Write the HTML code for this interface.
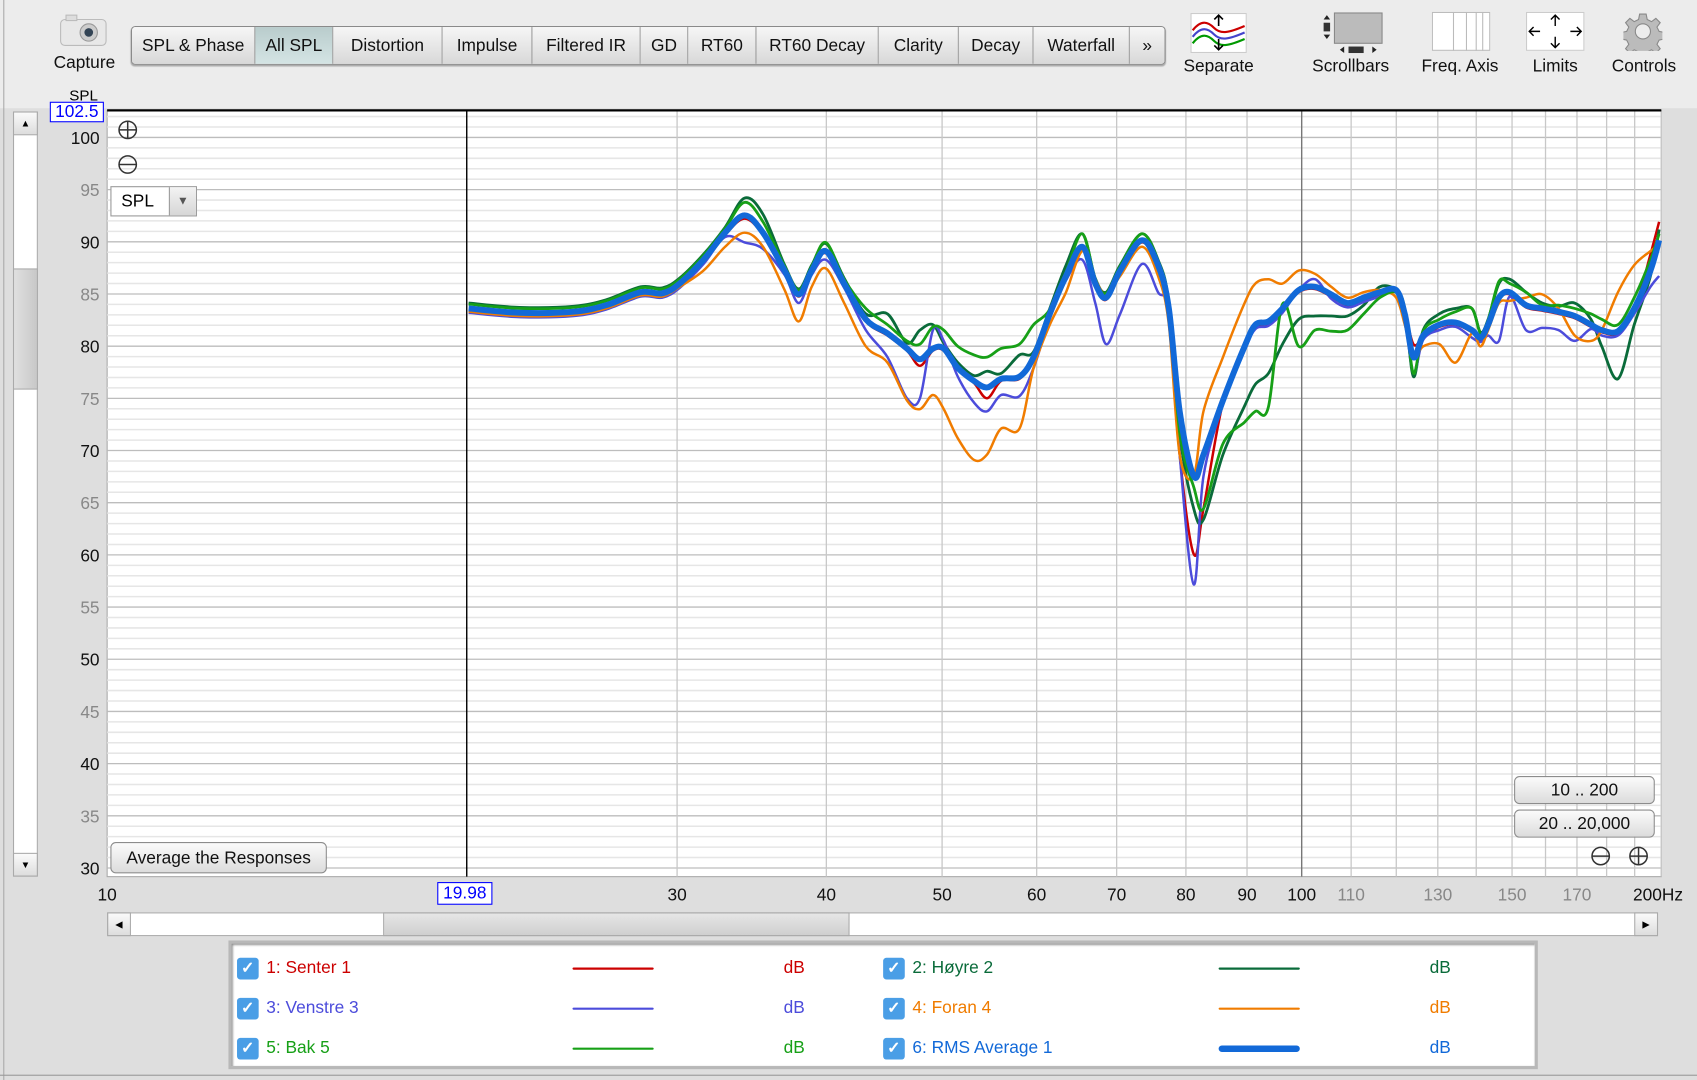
<!DOCTYPE html>
<html><head><meta charset="utf-8"><style>
*{margin:0;padding:0;box-sizing:border-box}
html,body{width:1697px;height:1080px;overflow:hidden;background:#dedede;font-family:"Liberation Sans",sans-serif}
#w{position:absolute;left:0;top:0;width:1568px;height:998px;transform:scale(1.08227);transform-origin:0 0;background:#dedede}
.abs{position:absolute}
.tabs{position:absolute;left:121px;top:24px;height:36px;display:flex;border:1px solid #8a8a8a;border-radius:4px;overflow:hidden;box-shadow:0 1px 1px #aaa}
.tabs div{height:34px;line-height:35px;font-size:16px;text-align:center;background:linear-gradient(#f6f6f6,#d8d8d8);border-right:1px solid #9a9a9a;color:#111;flex:none}
.tabs div.sel{background:linear-gradient(#b9cccc,#d4e4e4);}
.lbl{position:absolute;font-size:16px;color:#111;text-align:center}
.btn{position:absolute;border:1px solid #8c8c8c;border-radius:5px;background:linear-gradient(#fbfbfb,#dcdcdc);font-size:16px;text-align:center;color:#111}
.leg{position:absolute;font-size:16px}
.cb{position:absolute;width:20px;height:20px;background:#4a9ee6;border-radius:3px;color:#fff;font-size:15px;line-height:20px;text-align:center;font-weight:bold}
</style></head><body><div id="w">
<div class="abs" style="left:0;top:0;width:1568px;height:100px;background:#ececec"></div>
<div class="abs" style="left:3px;top:0;width:1px;height:998px;background:#aaa"></div>
<svg class="abs" style="left:55px;top:12px" width="44" height="32"><rect x="1" y="6" width="42" height="24" rx="4" fill="#e8e8e8" stroke="#bbb"/><rect x="6" y="2" width="10" height="5" fill="#ddd" stroke="#bbb"/><circle cx="27" cy="18" r="8" fill="#ccc" stroke="#999"/><circle cx="27" cy="18" r="4" fill="#345"/></svg>
<div class="lbl" style="left:40px;top:50px;width:76px">Capture</div>
<div class="tabs"><div style="width:114px">SPL &amp; Phase</div><div class="sel" style="width:72px">All SPL</div><div style="width:101px">Distortion</div><div style="width:83px">Impulse</div><div style="width:100px">Filtered IR</div><div style="width:44px">GD</div><div style="width:63px">RT60</div><div style="width:113px">RT60 Decay</div><div style="width:74px">Clarity</div><div style="width:69px">Decay</div><div style="width:89px">Waterfall</div><div style="width:32px;border-right:none">»</div></div>
<svg class="abs" style="left:1100px;top:12px" width="52" height="37"><rect x=".5" y=".5" width="51" height="36" fill="#fff" stroke="#ccc"/><path d="M2 16 C10 6,16 8,22 14 S36 18,50 12" stroke="#c00" stroke-width="2" fill="none"/><path d="M2 22 C10 12,16 14,22 20 S36 24,50 18" stroke="#44c" stroke-width="2" fill="none"/><path d="M2 28 C10 18,16 20,22 26 S36 30,50 24" stroke="#090" stroke-width="2" fill="none"/><path d="M26 2v10M22 6l4-4 4 4M26 24v10M22 30l4 4 4-4" stroke="#000" stroke-width="1.5" fill="none"/></svg>
<div class="lbl" style="left:1080px;top:53px;width:92px">Separate</div>
<svg class="abs" style="left:1220px;top:10px" width="60" height="40"><rect x="13" y="2" width="44" height="28" fill="#bbb" stroke="#888"/><rect x="3" y="11" width="6" height="8" fill="#333"/><path d="M3 8l3-4 3 4zM3 22l3 4 3-4z" fill="#222"/><rect x="26" y="33" width="14" height="6" fill="#333"/><path d="M18 36l4-3v6zM48 33l4 3-4 3z" fill="#222"/></svg>
<div class="lbl" style="left:1200px;top:53px;width:96px">Scrollbars</div>
<svg class="abs" style="left:1323px;top:11px" width="54" height="36"><rect x=".5" y=".5" width="53" height="35" fill="#fff" stroke="#bbb"/><path d="M20 0v36M32 0v36M41 0v36M47 0v36" stroke="#bbb"/></svg>
<div class="lbl" style="left:1303px;top:53px;width:92px">Freq. Axis</div>
<svg class="abs" style="left:1410px;top:11px" width="54" height="36"><rect x=".5" y=".5" width="53" height="35" fill="#fff" stroke="#ccc"/><path d="M27 3v10M23 7l4-4 4 4M27 23v10M23 29l4 4 4-4M3 18h10M7 14l-4 4 4 4M41 18h10M47 14l4 4-4 4" stroke="#000" stroke-width="1.3" fill="none"/></svg>
<div class="lbl" style="left:1400px;top:53px;width:74px">Limits</div>
<svg class="abs" style="left:1500px;top:11px" width="36" height="36" viewBox="0 0 36 36"><g fill="#bbb" stroke="#888"><path d="M15 2h6l1 5 4 2 4-3 4 4-3 4 2 4 5 1v6l-5 1-2 4 3 4-4 4-4-3-4 2-1 5h-6l-1-5-4-2-4 3-4-4 3-4-2-4-5-1v-6l5-1 2-4-3-4 4-4 4 3 4-2z"/></g><circle cx="18" cy="18" r="7" fill="#ececec" stroke="#888"/></svg>
<div class="lbl" style="left:1478px;top:53px;width:82px">Controls</div>
<div class="abs" style="left:12px;top:103px;width:23px;height:707px;background:#fff;border:1px solid #aaa"></div>
<div class="abs" style="left:12px;top:103px;width:23px;height:22px;background:linear-gradient(#fafafa,#ddd);border:1px solid #aaa;font-size:9px;text-align:center;line-height:20px">▲</div>
<div class="abs" style="left:12px;top:248px;width:23px;height:112px;background:linear-gradient(90deg,#e0e0e0,#c8c8c8);border:1px solid #aaa"></div>
<div class="abs" style="left:12px;top:788px;width:23px;height:22px;background:linear-gradient(#fafafa,#ddd);border:1px solid #aaa;font-size:9px;text-align:center;line-height:20px">▼</div>
<div class="abs" style="left:64px;top:80px;font-size:14px">SPL</div>
<svg id="plot" class="abs" style="left:0;top:0" width="1568" height="998"></svg>
<div class="abs" style="left:46px;top:94px;width:50px;height:19px;border:1.5px solid #00f;background:#fff;color:#00f;font-size:16px;text-align:center;line-height:18px">102.5</div>
<div class="abs" style="left:404px;top:815px;width:51px;height:21px;border:1.5px solid #00f;background:#fff;color:#00f;font-size:16px;text-align:center;line-height:20px">19.98</div>
<div class="abs" style="left:102px;top:172px;width:80px;height:28px;background:#fff;border:1px solid #999;font-size:16px;line-height:28px;padding-left:9px">SPL</div>
<div class="abs" style="left:156px;top:173px;width:25px;height:26px;background:linear-gradient(#f3f3f3,#d6d6d6);border-left:1px solid #999;font-size:11px;text-align:center;line-height:26px;color:#555">▼</div>
<div class="btn" style="left:102px;top:778px;width:200px;height:29px;line-height:29px">Average the Responses</div>
<div class="btn" style="left:1399px;top:717px;width:130px;height:26px;line-height:26px">10 .. 200</div>
<div class="btn" style="left:1399px;top:748px;width:130px;height:26px;line-height:26px">20 .. 20,000</div>
<div class="abs" style="left:99px;top:843px;width:1433px;height:22px;background:#fff;border:1px solid #aaa"></div>
<div class="abs" style="left:99px;top:843px;width:22px;height:22px;background:linear-gradient(#fafafa,#ddd);border:1px solid #aaa;font-size:9px;text-align:center;line-height:20px">◀</div>
<div class="abs" style="left:354px;top:843px;width:431px;height:22px;background:linear-gradient(#e6e6e6,#cfcfcf);border:1px solid #aaa"></div>
<div class="abs" style="left:1510px;top:843px;width:22px;height:22px;background:linear-gradient(#fafafa,#ddd);border:1px solid #aaa;font-size:9px;text-align:center;line-height:20px">▶</div>
<div class="abs" style="left:211px;top:869px;width:1210px;height:119px;background:#fff;border:3px solid #b8b8b8;box-shadow:inset 1px 1px 2px #888"></div>
<div id="leg"></div>
<div class="abs" style="left:0;top:993px;width:1568px;height:1px;background:#999"></div>
</div>
<script>
var S=document.getElementById('plot'),h='';
var L=99,R=1535,T=102,B=810;
function fx(f){return L+(R-L)*Math.log(f/10)/Math.log(20)}
function fy(d){return 802-(d-30)*9.643}
h+='<rect x="'+L+'" y="'+T+'" width="'+(R-L)+'" height="'+(B-T)+'" fill="#fff" stroke="#aaa"/>';
for(var d=30;d<=102;d++){var y=fy(d);h+='<line x1="'+L+'" x2="'+R+'" y1="'+y+'" y2="'+y+'" stroke="'+(d%5==0?'#bdbdbd':'#e6e6e6')+'" stroke-width="'+(d%5==0?1.2:1.4)+'"/>';}
for(var f=20;f<=200;f+=10){var x=fx(f);h+='<line x1="'+x+'" x2="'+x+'" y1="'+T+'" y2="'+B+'" stroke="'+(f==100?'#777':f==20?'#000':'#c8c8c8')+'" stroke-width="'+(f==20||f==100?1.3:1.2)+'"/>';}
h+='<line x1="'+L+'" x2="'+R+'" y1="'+T+'" y2="'+T+'" stroke="#000" stroke-width="2"/>';
for(var d=30;d<=100;d+=5){h+='<text x="92" y="'+(fy(d)+6)+'" text-anchor="end" font-size="16" fill="'+(d%10==0?'#111':'#888')+'" font-family="Liberation Sans">'+d+'</text>';}
var xl=[[10,'10','#111'],[30,'30','#111'],[40,'40','#111'],[50,'50','#111'],[60,'60','#111'],[70,'70','#111'],[80,'80','#111'],[90,'90','#111'],[100,'100','#111'],[110,'110','#888'],[130,'130','#888'],[150,'150','#888'],[170,'170','#888']];
xl.forEach(function(a){h+='<text x="'+fx(a[0])+'" y="832" text-anchor="middle" font-size="16" fill="'+a[2]+'" font-family="Liberation Sans">'+a[1]+'</text>'});
h+='<text x="1532" y="832" text-anchor="middle" font-size="16" fill="#111" font-family="Liberation Sans">200Hz</text>';
function pm(cx,cy,plus){return '<circle cx="'+cx+'" cy="'+cy+'" r="8" fill="none" stroke="#333" stroke-width="1.4"/><line x1="'+(cx-8)+'" x2="'+(cx+8)+'" y1="'+cy+'" y2="'+cy+'" stroke="#333" stroke-width="1.4"/>'+(plus?'<line x1="'+cx+'" x2="'+cx+'" y1="'+(cy-8)+'" y2="'+(cy+8)+'" stroke="#333" stroke-width="1.4"/>':'')}
h+=pm(118,120,1)+pm(118,152,0)+pm(1479,791,0)+pm(1514,791,1);
function path(p){var s='M'+p[0][0]+' '+p[0][1];for(var i=0;i<p.length-1;i++){var a=p[i-1]||p[i],b=p[i],c=p[i+1],d=p[i+2]||c;s+=' C'+(b[0]+(c[0]-a[0])/6).toFixed(1)+' '+(b[1]+(c[1]-a[1])/6).toFixed(1)+','+(c[0]-(d[0]-b[0])/6).toFixed(1)+' '+(c[1]-(d[1]-b[1])/6).toFixed(1)+','+c[0]+' '+c[1];}return s}
var avg=[[433,285],[480,289],[530,288],[560,282],[592,270],[612,271],[628,262],[650,240],[670,215],[688,199],[705,215],[725,250],[738,272],[750,250],[763,232],[780,262],[800,295],[820,308],[838,322],[850,332],[862,322],[872,322],[885,340],[900,352],[912,358],[925,350],[942,348],[955,330],[970,290],[985,255],[1000,228],[1012,262],[1022,275],[1035,250],[1055,222],[1070,245],[1080,285],[1090,380],[1103,440],[1112,420],[1130,370],[1150,320],[1160,300],[1172,297],[1185,285],[1200,268],[1215,265],[1230,272],[1245,280],[1260,275],[1275,270],[1290,268],[1298,290],[1306,330],[1315,310],[1330,300],[1345,298],[1360,305],[1368,312],[1375,300],[1385,275],[1395,270],[1410,282],[1425,285],[1440,288],[1455,292],[1470,300],[1480,305],[1495,306],[1510,285],[1525,250],[1533,222]];
function mod(base,ov){var m={};ov.forEach(function(o){m[o[0]]=o[1]});return base.map(function(p){return [p[0],m[p[0]]!==undefined?m[p[0]]:p[1]]})}
function shift(base,dy,ov){return mod(base.map(function(p){return [p[0],p[1]+dy]}),ov)}
var red=shift(avg,2,[[688,202],[850,338],[912,368],[1090,420],[1103,512],[1112,470],[1298,288],[1306,318],[1525,235],[1533,205]]);
var dkg=shift(avg,-5,[[688,183],[705,198],[763,225],[820,290],[850,305],[862,300],[912,343],[942,328],[985,245],[1000,216],[1055,216],[1090,400],[1103,470],[1112,480],[1130,420],[1150,375],[1160,355],[1172,345],[1185,318],[1200,295],[1215,292],[1230,292],[1245,292],[1260,282],[1290,268],[1306,348],[1330,290],[1345,285],[1360,285],[1385,262],[1395,258],[1410,270],[1425,280],[1455,280],[1470,295],[1480,320],[1495,350],[1510,300],[1525,255],[1533,212]]);
var pur=shift(avg,4,[[688,224],[705,230],[738,280],[763,240],[800,305],[820,330],[838,368],[850,368],[862,305],[872,315],[885,348],[900,372],[912,380],[925,365],[942,366],[955,340],[1000,240],[1012,280],[1022,318],[1035,290],[1055,244],[1070,270],[1090,420],[1100,552],[1103,540],[1112,440],[1200,268],[1215,258],[1290,270],[1306,345],[1330,305],[1360,312],[1375,310],[1385,315],[1398,330],[1410,305],[1425,303],[1440,305],[1455,315],[1465,330],[1480,310],[1495,310],[1510,290],[1525,265],[1533,255]]);
var ora=shift(avg,3,[[650,250],[670,228],[688,215],[705,228],[725,268],[738,297],[750,265],[763,248],[780,280],[800,320],[820,335],[838,370],[850,378],[862,365],[872,378],[885,405],[900,425],[906,428],[912,420],[925,396],[942,396],[955,340],[970,300],[985,270],[1000,232],[1012,258],[1022,272],[1035,255],[1055,228],[1070,255],[1080,300],[1090,420],[1097,490],[1103,440],[1112,380],[1130,330],[1150,280],[1160,262],[1172,258],[1185,262],[1200,250],[1215,253],[1230,265],[1245,275],[1260,270],[1275,268],[1290,275],[1298,300],[1306,330],[1315,320],[1330,318],[1345,335],[1357,350],[1368,320],[1375,305],[1385,280],[1395,278],[1410,275],[1425,272],[1440,285],[1455,310],[1462,330],[1470,315],[1480,305],[1495,270],[1510,245],[1525,232],[1533,226]]);
var grn=shift(avg,-4,[[688,187],[705,205],[763,224],[800,285],[820,300],[838,315],[850,318],[862,302],[872,305],[885,320],[900,328],[912,330],[925,322],[942,318],[955,300],[1000,216],[1055,216],[1090,400],[1103,450],[1112,470],[1130,410],[1150,390],[1160,380],[1172,376],[1178,385],[1188,360],[1200,320],[1215,305],[1230,306],[1245,305],[1260,290],[1275,275],[1290,270],[1306,345],[1330,295],[1345,288],[1360,285],[1385,260],[1395,262],[1410,270],[1425,282],[1440,282],[1455,285],[1470,290],[1480,295],[1495,300],[1510,275],[1525,240],[1533,216]]);
[[red,'#c00',2.3],[dkg,'#0a6b3a',2.6],[pur,'#4c4cdb',2.3],[ora,'#f07c00',2.3],[grn,'#17a017',2.6],[avg,'#1269d8',5.5]].forEach(function(c){h+='<path d="'+path(c[0])+'" fill="none" stroke="'+c[1]+'" stroke-width="'+c[2]+'" stroke-linejoin="round"/>'});
S.innerHTML=h;
var lg='',items=[[0,'1: Senter 1','#c00',2.5],[1,'2: Høyre 2','#0a6b3a',2.5],[0,'3: Venstre 3','#4c4cdb',2.5],[1,'4: Foran 4','#f07c00',2.5],[0,'5: Bak 5','#17a017',2.5],[1,'6: RMS Average 1','#1269d8',6]];
items.forEach(function(it,i){var r=Math.floor(i/2),y=895+r*37,x0=it[0]?816:219;
lg+='<div class="cb" style="left:'+x0+'px;top:'+(y-10)+'px">✓</div><div class="leg" style="left:'+(x0+27)+'px;top:'+(y-9)+'px;color:'+it[2]+'">'+it[1]+'</div><div class="abs" style="left:'+(x0+310)+'px;top:'+(y-it[3]/2)+'px;width:75px;height:'+it[3]+'px;border-radius:3px;background:'+it[2]+'"></div><div class="leg" style="left:'+(x0+505)+'px;top:'+(y-9)+'px;color:'+it[2]+'">dB</div>'});
document.getElementById('leg').innerHTML=lg;
</script>
</body></html>
